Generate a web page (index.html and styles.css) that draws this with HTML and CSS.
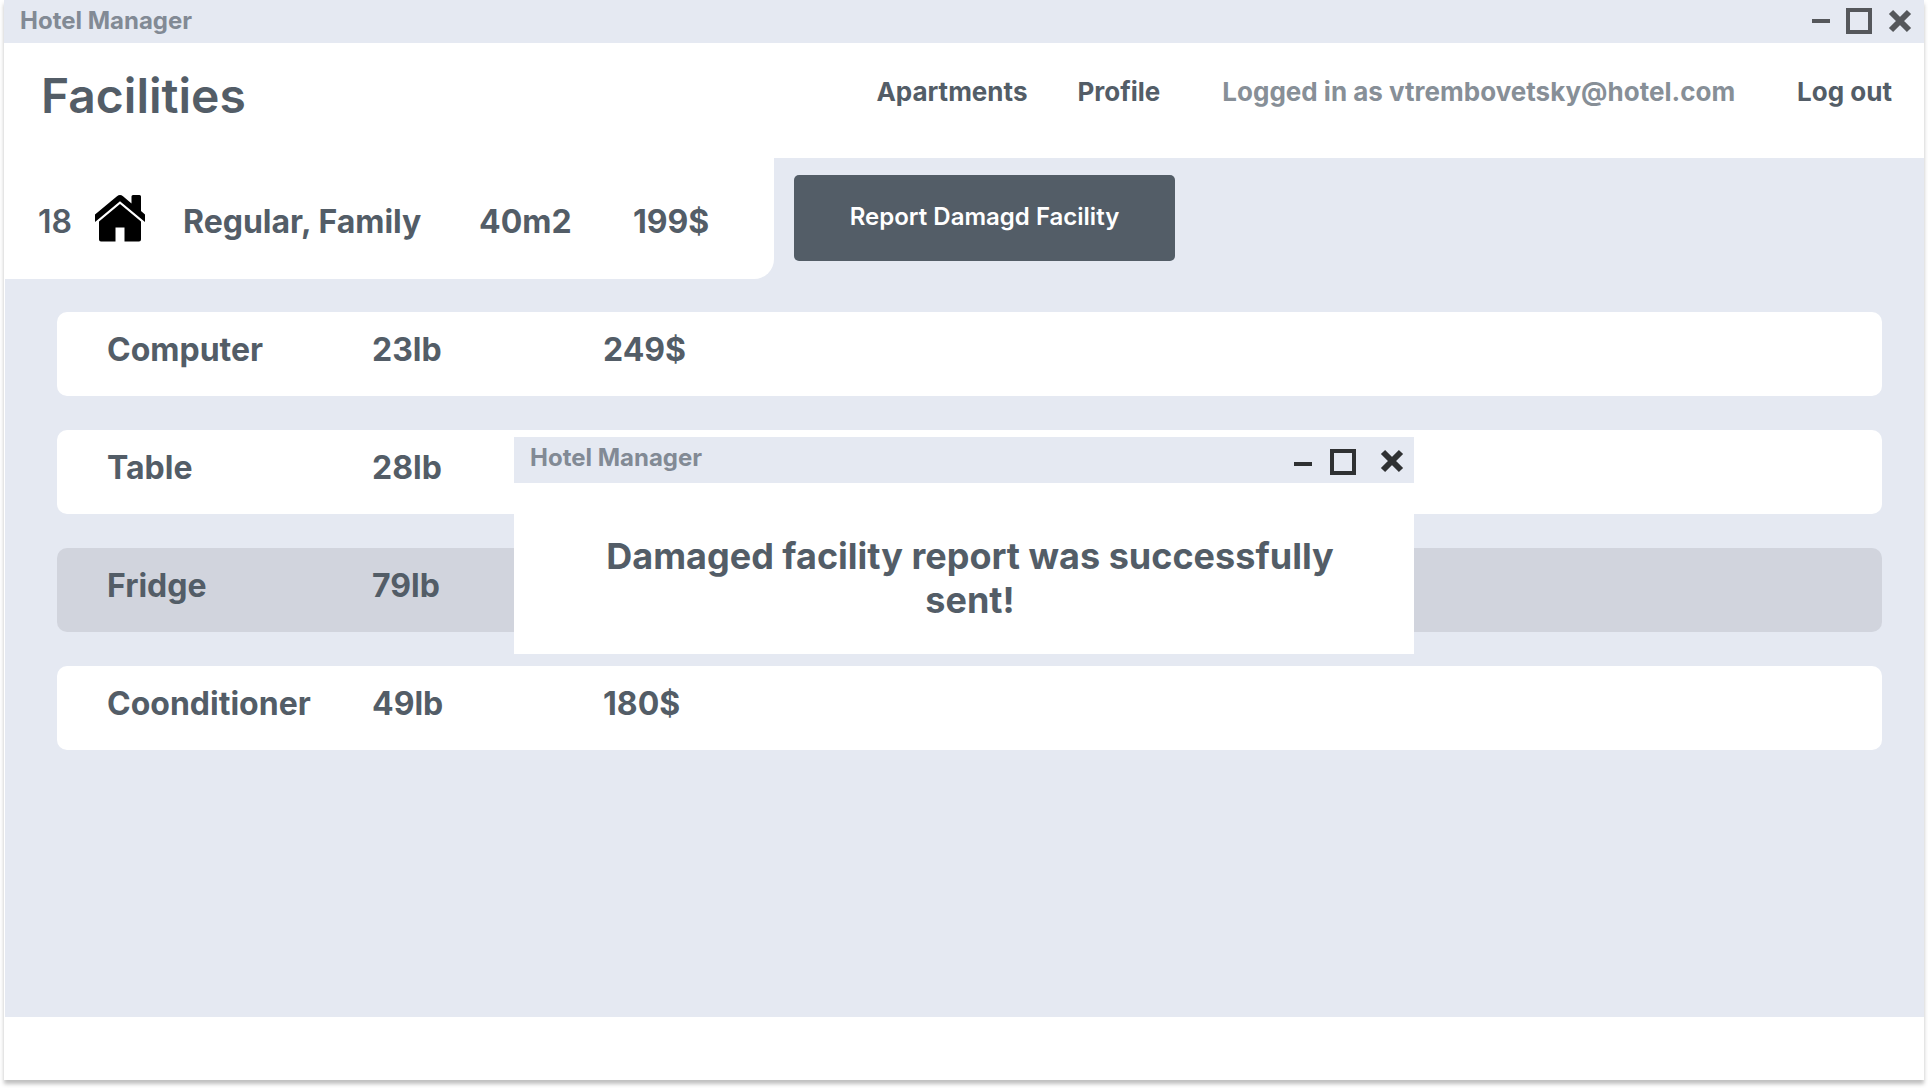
FILE: index.html
```html
<!DOCTYPE html>
<html lang="en">
<head>
  <meta charset="utf-8">
  <title>Hotel Manager</title>
  <link rel="stylesheet" href="styles.css">
</head>
<body>
  <div class="window">
    <div class="titlebar">
      <span class="titlebar-name">Hotel Manager</span>
      <div class="controls">
        <button type="button" aria-label="Minimize"><svg width="18" height="26" viewBox="0 0 18 26"><path d="M0 13h18" stroke="currentColor" stroke-width="4"/></svg></button>
        <button type="button" aria-label="Maximize"><svg width="26" height="26" viewBox="0 0 26 26"><path d="M2 2h22v22H2z" fill="none" stroke="currentColor" stroke-width="4"/></svg></button>
        <button type="button" aria-label="Close"><svg width="24" height="26" viewBox="0 0 24 26"><path d="M3 4l18 18M21 4L3 22" stroke="currentColor" stroke-width="6"/></svg></button>
      </div>
    </div>

    <header class="header">
      <h1>Facilities</h1>
      <nav class="nav">
        <a href="#apartments">Apartments</a>
        <a href="#profile">Profile</a>
        <span class="user">Logged in as vtrembovetsky@hotel.com</span>
        <a href="#logout">Log out</a>
      </nav>
    </header>

    <main class="content">
      <div class="toolbar">
        <section class="room" aria-label="Apartment">
          <span class="room-number">18</span>
          <svg class="home" width="50" height="48" viewBox="0 0 50 48" aria-hidden="true">
            <path d="M0 19.5L22 1.200Q25 -1.200 28 1.200L36.500 8.500V1.500Q36.500 0 38 0H44.500Q46 0 46 1.500V16L50 19.500V27L25 6.300L0 27Z"/>
            <path d="M4 26.500L25 9L46 26.500V44.500Q46 46.500 44 46.500H29.500V32.500H20.500V46.500H6Q4 46.500 4 44.500Z"/>
          </svg>
          <span class="room-type">Regular, Family</span>
          <span class="room-size">40m2</span>
          <span>199$</span>
        </section>
        <button type="button" class="report">Report Damagd Facility</button>
      </div>

      <table class="facilities" aria-label="Facilities">
        <colgroup><col class="col-name"><col class="col-weight"><col></colgroup>
        <tbody>
          <tr><td>Computer</td><td>23lb</td><td>249$</td></tr>
          <tr><td>Table</td><td>28lb</td><td></td></tr>
          <tr class="selected"><td>Fridge</td><td>79lb</td><td></td></tr>
          <tr><td>Coonditioner</td><td>49lb</td><td>180$</td></tr>
        </tbody>
      </table>
    </main>

    <footer class="footer"></footer>

    <div class="dialog" role="dialog" aria-labelledby="dialog-title" aria-describedby="dialog-text">
      <div class="dialog-bar">
        <span class="titlebar-name" id="dialog-title">Hotel Manager</span>
        <div class="controls">
          <button type="button" aria-label="Minimize"><svg width="18" height="26" viewBox="0 0 18 26"><path d="M0 15h18" stroke="currentColor" stroke-width="4"/></svg></button>
          <button type="button" aria-label="Maximize"><svg width="26" height="26" viewBox="0 0 26 26"><path d="M2 2h22v22H2z" fill="none" stroke="currentColor" stroke-width="4"/></svg></button>
          <button type="button" class="close" aria-label="Close"><svg width="24" height="26" viewBox="0 0 24 26"><path d="M3 3l18 18M21 3L3 21" stroke="currentColor" stroke-width="6"/></svg></button>
        </div>
      </div>
      <p id="dialog-text">Damaged facility report was successfully sent!</p>
    </div>
  </div>
</body>
</html>
```
FILE: styles.css
```css
* {
  box-sizing: border-box;
}

body {
  margin: 0;
  background: #fff;
  color: #535d67;
  font-family: Inter, "Liberation Sans", sans-serif;
  font-size: 32px;
  font-weight: 700;
  line-height: 40px;
}

button {
  margin: 0;
  padding: 0;
  border: 0;
  background: none;
  color: inherit;
  font: inherit;
}

.window {
  position: relative;
  display: flex;
  flex-direction: column;
  min-height: calc(100vh - 8px);
  margin: 0 4px 8px;
  background: #fff;
  box-shadow: 0 4px 4px rgba(0, 0, 0, 0.25);
}

.titlebar,
.dialog-bar {
  display: flex;
  justify-content: space-between;
  background: #e5e9f2;
}

.titlebar {
  height: 43px;
  padding: 6px 12px 0 16px;
  color: #55575b;
}

.titlebar-name {
  color: #828a95;
  font-size: 24px;
  line-height: 30px;
}

.controls {
  display: flex;
  align-items: center;
  height: 30px;
  gap: 16px;
}

.controls button,
.controls svg {
  display: block;
}

.header {
  display: flex;
  justify-content: space-between;
  height: 115px;
  padding: 23px 32px 0 37px;
}

h1 {
  margin: 0;
  font-size: 48px;
  font-weight: 600;
  line-height: 60px;
}

.nav {
  display: flex;
  gap: 50px;
  font-size: 26px;
  line-height: 52px;
}

.nav a {
  color: inherit;
  text-decoration: none;
}

.user {
  margin: 0 12px;
  color: #878f97;
}

.content {
  flex: 1;
  margin-left: 1px;
  background: #e5e9f2;
}

.toolbar {
  display: flex;
  gap: 20px;
}

.room {
  display: flex;
  align-items: center;
  width: 769px;
  height: 121px;
  padding: 6px 0 0 33px;
  border-radius: 0 0 20px 0;
  background: #fff;
}

.room-number {
  width: 57px;
  font-weight: 600;
}

.home {
  margin: 0 38px 6px 0;
  fill: #000;
}

.room-type {
  width: 296px;
}

.room-size {
  width: 154px;
}

.report {
  width: 381px;
  height: 86px;
  margin-top: 17px;
  padding-bottom: 2px;
  border-radius: 5px;
  background: #535d67;
  color: #fff;
  font-size: 24px;
  font-weight: 600;
}

.facilities {
  width: calc(100% - 94px);
  margin: -1px 42px 0 52px;
  border-collapse: separate;
  border-spacing: 0 34px;
  table-layout: fixed;
}

.col-name {
  width: 315px;
}

.col-weight {
  width: 231px;
}

.facilities td {
  height: 84px;
  padding: 18px 0 26px;
  background: #fff;
}

.facilities td:first-child {
  padding-left: 50px;
  border-radius: 10px 0 0 10px;
}

.facilities td:last-child {
  border-radius: 0 10px 10px 0;
}

.facilities .selected td {
  background: #d1d4dd;
}

.footer {
  height: 63px;
}

.dialog {
  position: absolute;
  top: 437px;
  left: 50%;
  width: 900px;
  transform: translateX(-50%);
  background: #fff;
}

.dialog-bar {
  height: 46px;
  padding: 6px 10px 0 16px;
  color: #2f3133;
}

.dialog-bar .controls {
  height: 38px;
  gap: 18px;
}

.dialog-bar .close {
  margin-left: 6px;
}

.dialog p {
  margin: 0;
  padding: 51px 74px 32px 86px;
  font-size: 36px;
  line-height: 44px;
  text-align: center;
}
```
